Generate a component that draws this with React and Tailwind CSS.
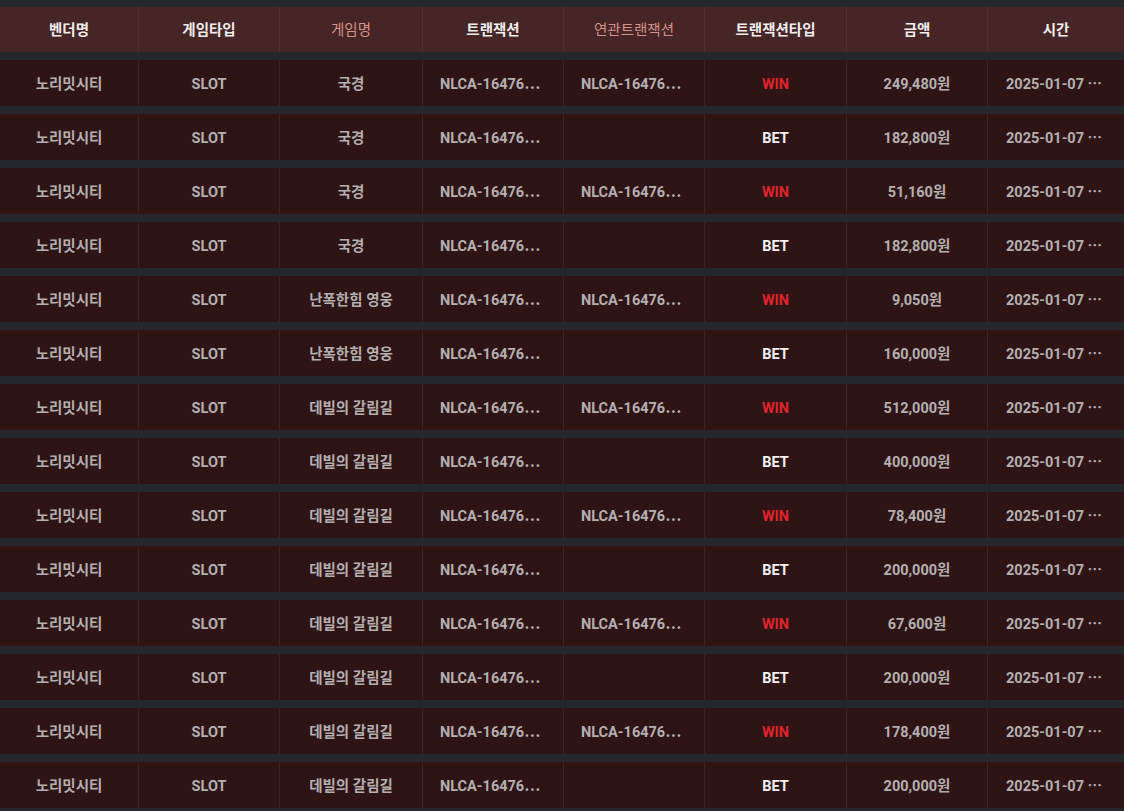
import React from "react";

const headers = [
  { label: "벤더명" },
  { label: "게임타입" },
  { label: "게임명", accent: true },
  { label: "트랜잭션" },
  { label: "연관트랜잭션", accent: true },
  { label: "트랜잭션타입" },
  { label: "금액" },
  { label: "시간" },
];

const rows = [
  ["국경", "WIN", "249,480원"],
  ["국경", "BET", "182,800원"],
  ["국경", "WIN", "51,160원"],
  ["국경", "BET", "182,800원"],
  ["난폭한힘 영웅", "WIN", "9,050원"],
  ["난폭한힘 영웅", "BET", "160,000원"],
  ["데빌의 갈림길", "WIN", "512,000원"],
  ["데빌의 갈림길", "BET", "400,000원"],
  ["데빌의 갈림길", "WIN", "78,400원"],
  ["데빌의 갈림길", "BET", "200,000원"],
  ["데빌의 갈림길", "WIN", "67,600원"],
  ["데빌의 갈림길", "BET", "200,000원"],
  ["데빌의 갈림길", "WIN", "178,400원"],
  ["데빌의 갈림길", "BET", "200,000원"],
];

const font = { fontFamily: '"Roboto", "Noto Sans CJK KR", sans-serif' };
const cols = "grid-cols-[138px_141px_143px_141px_141px_142px_141px_1fr]";

// cut-off text: the table shows a centred ellipsis after the visible part
const Clipped = ({ text }) => (
  <span className="whitespace-nowrap">
    {text}
    <span className="font-['Noto_Sans_CJK_KR'] leading-none">…</span>
  </span>
);

const Cell = ({ children, first, left, className = "" }) => (
  <div
    className={`flex items-center whitespace-nowrap min-w-0 pt-[3px] leading-[20px] ${
      left ? "justify-start pl-[17px]" : "justify-center px-[17px]"
    } ${first ? "" : "border-l border-[#3d2424]"} ${className}`}
  >
    {children}
  </div>
);

export default function App() {
  return (
    <div
      className="min-h-screen w-full overflow-hidden bg-[#24282d] pt-[7px] text-[14.5px]"
      style={font}
    >
      {/* header */}
      <div className={`grid h-[45px] ${cols} bg-[#452525]`}>
        {headers.map((h, idx) => (
          <div
            key={idx}
            className={`flex items-center justify-center pt-[2px] ${
              idx === 0 ? "" : "border-l border-[#522f2f]"
            } ${
              h.accent
                ? "font-normal text-[#d6928a]"
                : "font-bold text-[#f2eeee]"
            }`}
          >
            {h.label}
          </div>
        ))}
      </div>

      {/* body */}
      <div className="mt-[8px] flex flex-col gap-[8px]">
        {rows.map(([game, type, amount], rowIndex) => (
          <div
            key={rowIndex}
            className={`grid h-[46px] ${cols} bg-[#2e1415] font-bold text-[#b4b0b0]`}
          >
            <Cell first>노리밋시티</Cell>
            <Cell>SLOT</Cell>
            <Cell>{game}</Cell>
            <Cell left>
              <Clipped text="NLCA-16476" />
            </Cell>
            <Cell left>
              {type === "WIN" ? <Clipped text="NLCA-16476" /> : null}
            </Cell>
            <Cell
              className={type === "WIN" ? "text-[#e0242c]" : "text-[#f4f2f2]"}
            >
              {type}
            </Cell>
            <Cell>{amount}</Cell>
            <Cell left className="pl-[18px]">
              <Clipped text="2025-01-07 " />
            </Cell>
          </div>
        ))}
      </div>
    </div>
  );
}
